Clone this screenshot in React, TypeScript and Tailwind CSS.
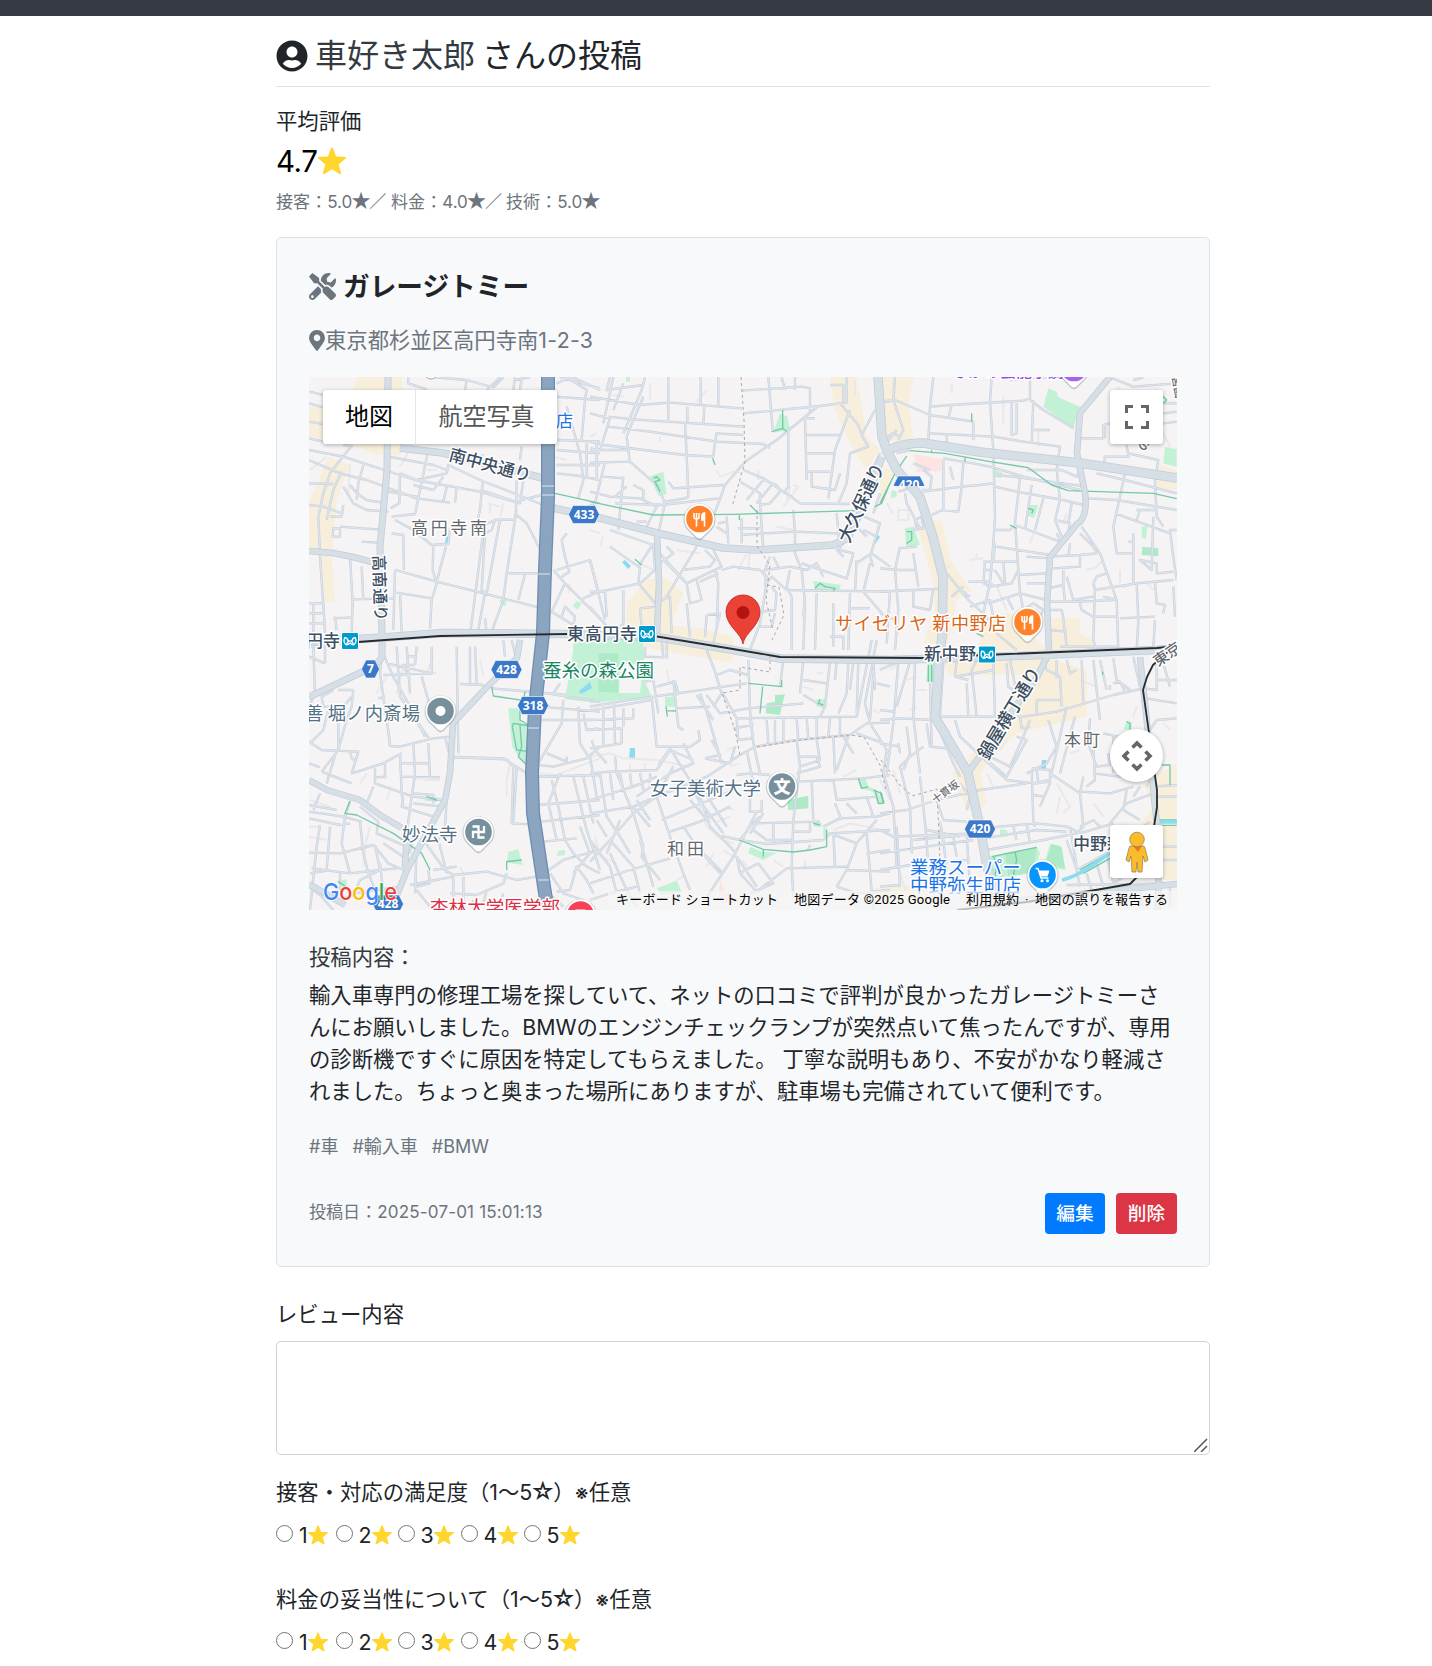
import React from "react";
import { FaMapMarkerAlt, FaTools, FaUserCircle } from "react-icons/fa";

type Tile = { x: number; y: number; shops: string; green: string; deep: string; minor: string; faint: string; path: string };

// Each tile is drawn at three units per map pixel.
const tiles: Tile[] = [
  {
    x: 300,
    y: 370,
    shops: "M170 20H305V60H160ZM27 110H75V205H27ZM150 222H305V255H230ZM85 260L150 285L110 390L95 560L105 695H75L60 560L27 540V400Z",
    green: "M600 690L618 686V707H605ZM830 692L846 700L832 718L818 708ZM820 820H900V840H820Z",
    deep: "",
    minor:
      "M27 65L70 75M27 100L70 112M27 155L70 162M27 205L70 215M27 240L130 260L345 330L540 365M27 270L120 310L200 330L350 385L450 398M130 225L155 228L130 258L90 310L70 370L55 440L60 560L75 780M27 340L100 342M27 405L70 410L130 432M150 345L170 370L200 390L250 398M130 350L160 400L200 420L265 425M90 440L125 440L130 405M100 475H120V500H98ZM120 470L185 475L235 478M185 515L235 518M125 305L100 360L80 450M150 560L158 700L155 790M185 590L190 690M190 285L175 340L170 390M275 440L345 432L385 240M265 365L350 380M300 310L350 330L440 310L445 285L540 330M300 310L298 400L272 415M265 260L400 285L440 300M325 22V40L380 58M405 22L500 30L580 52L610 22M500 30L495 60M560 60L600 22M645 22L640 60M665 22L660 60M690 22L640 30M545 365L550 330M540 330L730 405M545 365L540 420L535 440L548 500L512 780M275 490L310 495L312 600M285 450L340 480L395 525L445 522L450 475M400 530L398 600L410 640L395 690L390 775M438 530L410 635M285 600L410 635L530 665L715 712M290 668L395 685M155 688L285 685M285 600L280 780M300 670L305 785M540 470L585 450L645 448L648 420M585 450L575 480L555 490L545 660L555 668L535 780M600 450L560 670M645 450L620 610L610 690L575 785M620 610L715 610M675 612L655 690M645 430L680 460L718 535M545 360L645 395L725 375M650 330L648 430M430 320L400 360L340 345M440 350L430 395M470 350L465 398M540 365L660 400L670 330M480 240L510 270L550 255M440 245L540 280M665 230L660 270M770 40L815 20L900 60M765 80L900 90M780 22L900 55M800 22L860 60L855 90L845 210M770 210L900 215M770 240L900 250M770 285H900M770 310L840 318L900 330M800 110L840 250L850 330L835 385M860 220L860 320M890 210V330M760 600L795 640L900 745M795 640L755 725L820 765L825 740L795 710L785 740M770 600L870 570L895 665L840 690M800 490L785 510L795 560L808 605L785 620M27 700H70L75 790M27 730H70M40 700V790M27 760H75M100 745L160 742M105 740L110 780M555 745L560 790",
    faint: "M150 280L145 370M80 260L30 300M565 400L600 410M570 400V430M610 400L600 440M760 260L800 270M865 405L900 410M870 480L900 490M810 640L805 670M380 300H410M345 210L300 290",
    path: "M765 370L900 400",
  },
  {
    x: 590,
    y: 370,
    shops: "M720 20H800L830 200L870 240L835 290L820 290L765 190L735 120ZM170 630L225 622L280 670L240 765L330 775L430 800V825L330 820L200 790L110 770V700Z",
    green: "M570 130L592 140L600 180L550 188ZM180 318L220 305L230 372L205 378ZM670 632L753 645L745 665H675ZM0 808H155V840H0ZM108 20H120V35H108Z",
    deep: "",
    minor:
      "M0 80L150 105L240 98L455 115M55 140L130 148L460 170M0 130L60 145L30 240L0 235M55 170L180 185L380 215L520 222L540 235M0 215L40 225L285 255L370 260M0 240L110 240M0 278L120 275L205 350L225 400L205 490M70 22L40 160M165 22L155 60L100 190M60 22L50 60L160 45M160 80L130 150L110 200L120 280M100 40L70 120M235 22V150M292 110V155M343 112L340 160M332 22V105M385 22V105M455 62L635 50L660 55V130M460 130L690 108L770 98M465 275L560 210L685 108M535 22L548 180M615 22V60M575 22L585 60M595 185L595 350L580 370M640 145H675M645 150L650 330M650 195H750M650 250H735M650 305H720M780 120L735 240L715 385M720 45H760V95M770 22V100M750 100L775 130L805 165L815 195L835 230L780 250L770 340L745 400M855 120L815 195M880 95H900M870 250L800 400M370 260L375 215L380 190L460 195M465 275L405 345L385 400L365 450M460 300L520 325L610 385L630 400L780 402M450 335L510 370L510 405L540 400L570 365L560 345L520 330L470 390M545 345L500 400M665 310V350L735 360L750 310M215 405L385 385M225 395L285 385L295 380L290 255L285 160M235 335L250 355L400 345M0 365L60 380L150 385L200 410M45 275L15 400L0 410M40 320L100 325M100 320L85 480M75 400L220 405M130 345L160 360V390M75 380L110 350M205 400L165 480M170 455L140 455M385 460L410 455M380 470L410 490M410 440L415 520M455 445V520M450 495L520 490L620 485L740 490L780 470M445 475H510M510 400L520 540M610 420L615 490L615 550L635 600L645 700L640 840M740 430L750 540L790 550L770 625L635 580M540 560L525 600L600 590L650 600L680 580L700 620M565 590L550 560M370 540L395 590L290 640L220 570M320 530L230 680L200 700M205 545L290 640M345 540L375 570L360 590L275 600M230 530L250 550L210 580M395 600L430 590L510 600L530 620L525 645L545 620L590 660L900 665M60 480L190 525L195 600L150 640L30 665L0 665M0 570L45 750M0 710L60 780M30 665L45 665L50 740M100 660V760L80 780M150 590L145 640L195 700L205 695L240 680L245 790M60 530L145 590L190 520M150 715L200 710M150 715L155 770L190 790M290 640L300 700L335 690L320 630M290 700L300 800M375 600L385 640L380 780M350 735L390 730L370 820M350 735L345 800M330 635L385 610M520 600L530 640L510 760L480 840M515 725L555 720L560 670L545 650M510 770H545L555 730M600 600L590 650L605 680V840M680 670L675 840M645 675L640 740M780 670L775 840M730 700V830M775 715H840M800 570L795 665M800 580L845 550L900 590M760 560L740 540L760 520M800 430L870 460L840 560L850 590M820 480L860 500M780 450L830 500M850 430L870 370M720 800H760V840M840 580L820 665L880 735",
    faint: "M350 60L320 95M505 300V330M610 345L625 350L580 410M600 350L590 390M210 200V215M480 540L475 590M470 550L445 600M380 300L390 320L430 305L455 310M260 540L330 550M560 470L610 480M180 40V90M65 75L100 80M0 200L20 190M40 500L30 530M795 30V80M150 580L190 600",
    path: "M0 395L190 435L430 433L600 428L800 422M578 120V175L545 185M578 175L590 185M368 265L375 285M190 325L200 320L210 330L195 335L210 365M448 435V450M480 405L505 430M135 568L155 585M675 655L690 640L705 650L735 655L730 663M855 410L875 400L900 340",
  },
  {
    x: 880,
    y: 370,
    shops: "M0 20H100L85 100L100 205L60 215L20 210L5 100ZM835 285L890 300V360L832 355ZM160 450L185 455L215 580L275 660L230 690L205 820H130L165 720L160 640L115 480ZM510 745H600V790L640 810V840H510ZM300 740L400 730L500 840H300ZM0 300L50 290L20 370L0 400Z",
    green: "M505 55L530 65L535 82L600 110L580 175L490 110ZM855 230L890 238V290L850 280ZM345 300L368 308L362 325L342 318ZM445 405L475 405L462 445L440 435ZM75 475L100 470L120 525L78 530ZM785 470L802 468L798 505H785ZM35 360L50 365V380L32 385Z",
    deep: "M787 531L835 534V559L785 555Z",
    minor:
      "M0 95L45 90L150 135L280 155V210M45 22L40 90L70 180L55 210M160 22L150 110L145 215M155 110L210 105L430 92L450 85V25L390 30M335 22L330 95L340 240L345 440L340 520L330 640L310 730M215 105L205 145M410 100V190L395 195V100M450 90L490 120L580 175M460 90L455 220M455 180H510M150 190L340 200L430 215L540 230L530 300M200 195V225M430 22H580M600 205H670V165L690 160M675 205V165M670 260L745 260L740 225M745 250L835 270L825 330L830 440L850 470M670 290L675 265M735 310L700 470L710 550L755 550M650 310L735 330L890 370M620 385L710 390L890 420M440 300H545L590 320L600 300M345 315L400 320L620 350M345 350L410 365L550 390L610 405M340 340L300 345L245 350L130 365M155 435L185 420L235 425L245 350M190 270V420M250 275L245 345M190 265L280 280L330 290L430 320L600 360M420 320L415 370L405 455L415 600L420 670M455 345L435 480M490 385L465 480M530 300L540 390L525 450L545 500M525 450L570 460L565 480M575 400L565 460M530 490L545 520M345 480H390L405 465L540 515M350 530L510 555M440 560L510 565M345 520L340 575H410M310 575H345M315 575L310 640L330 650L395 640L415 600M315 600H340M415 615L500 610M440 640H500M325 700L420 670L500 690M420 670L430 720L460 700L490 720L480 740M380 680L400 720M370 575L375 640L350 650M200 610L265 690L320 740L350 790L410 840M250 650L215 680M265 635L325 635L345 650M240 660L270 680M270 710L330 690L340 740M150 720L100 710V660L200 655M150 720L160 655M60 530L45 600L55 720L45 840M55 535L110 530M0 595L55 600H110M100 550L115 650M0 665L100 660M30 665L20 820M100 480L130 475L125 440L105 450L110 480M75 370L80 400L120 475M55 365L75 360L100 340L80 320M130 300L155 320L150 360L125 360M100 280L150 300M705 430L870 490M770 420H830M780 420L770 450M820 440L815 600L780 570L830 580V610L880 605M760 490V640L730 650M745 515H760M890 480H870L880 560L890 630M605 470L660 550L710 690L715 840M570 520L565 560M510 560L600 555L650 550L640 530L600 490M520 595L600 590V560M505 655L550 645L555 695M510 695L600 695L700 690M560 620L580 690L640 680M550 600V660M640 640L650 620L680 610M640 640L645 660L770 640L880 630M645 650L640 810L650 840M640 740H715M770 640L775 750L770 840M825 635L830 700L855 705L850 730M720 745L825 740M825 750L820 830M670 680L710 690M510 720H545L550 745L560 830M510 780L560 785M600 700L605 720L640 740M880 650L885 740M540 830H710M0 730L45 750M690 22L760 50L890 40M760 30L790 22M780 110L830 60M830 100H890M850 130L890 125M850 160L890 155M15 205L40 190L60 200M10 230L50 180M50 250L90 240M345 600L370 640M210 290L220 330",
    faint: "M215 40V70M370 80V160M560 430L550 460M460 490L450 520M40 40V60M270 570L310 565M290 550V570M210 590L190 600M350 650L380 720M55 420H85V450H55ZM620 600L655 590M670 570L650 590M720 600V640M850 190L870 230M800 640L820 660M20 400L40 430M475 180V230M715 50V100",
    path: "M90 242L195 250L330 275L445 293L515 345L565 362L820 370L890 386M45 310L80 258M155 240V250M255 262V275M0 400L45 310M275 130V155M445 415L460 420L455 430M390 465L410 475M80 485H95V510L80 520M820 70L850 80L860 90L850 100M290 790L310 800",
  },
  {
    x: 300,
    y: 640,
    shops: "",
    green: "M825 0H900V190L795 178ZM625 205H655L665 250L685 255V375L655 350L637 320ZM375 470L412 472V485L375 482ZM625 635L655 628L668 675L620 668ZM775 632L795 630V645L770 648ZM110 722L140 718V745L125 738Z",
    deep: "",
    minor:
      "M27 50L75 70M27 20H75V70M40 20L45 160L27 200M245 50L240 100L270 310M260 70L395 100M250 105L395 100V20M290 20L300 170L390 300M240 20L280 110L330 200L375 290M320 20L330 160M350 20L345 75M320 48L350 50M345 75H310L330 120M365 110L390 200M470 20L475 340M510 20V130M525 20L530 130M480 132L550 135M610 0L615 50M635 0L650 60M235 175L255 170M160 150L155 200L140 240L115 330M115 150H160M155 170L130 200H70L65 170L100 150M115 200V330L65 395M27 305L65 330L175 335L155 400L250 370L305 340M85 210L70 270L30 310M65 395L155 430M110 330L80 430M150 335L155 355L170 365M27 370L60 382M270 318L300 320L400 295L450 290M265 270L270 320M300 340L305 460L310 500M340 310L345 405L335 470L320 580M385 310L390 410M300 370H385M305 410L420 412M225 385V430L340 470L430 480M225 412L260 410M255 370V415M220 440L200 490M310 470L305 500L400 530M340 460L400 465V490M340 490L430 500M435 290L450 350L610 355L680 400M460 352L620 358L640 380L635 550L690 553M650 385L640 545M340 565L330 640M440 480L435 560L415 600L440 700M370 600L435 690L460 705L560 695L650 720L710 710M400 690L470 680M460 710V790M490 710V810M450 760L530 765L610 730L620 700M330 735L460 710M385 690L390 730L350 740M150 485L135 530M60 460L40 510M27 495L110 510M27 515L130 530L185 545M27 535L120 555L150 550M135 530L125 610L150 700M60 555L50 620L30 810M90 560L80 690M27 638L120 640L220 615L265 670L310 690M180 545L190 640L205 700L230 760M180 500L235 545L230 580L320 620M250 610L310 650M225 615L240 690L180 720L160 770M150 700L240 690L290 685M35 685L150 700M90 690L30 700M120 700V750M240 670L250 760L300 740M160 760L300 740M27 740L60 765L100 810M350 620L345 760M350 750L390 800M560 750L550 790M520 780V810M610 760L600 790M740 160L900 185M720 200L900 215M720 240L880 240M780 130L760 160M790 180L785 250L715 370M715 375L760 380L860 355L900 320M835 200L840 310L865 350M850 220L860 270L895 265M740 340L800 365V350M715 410L900 405M755 420L775 500L795 600L820 640M820 410L860 570L900 690M780 400L745 490L770 600M850 410L880 550M715 495L900 480M725 545L900 525M730 605L830 595M740 695L790 660L900 630M750 700L790 760L850 780M770 755L810 750L830 680L860 720L880 760M820 640L860 680L900 700M745 760L790 800M840 560L870 640L820 700M575 145L800 165",
    faint: "M400 50L380 100H410M260 110L230 160M715 400L770 405L900 355M630 370L620 420V470M180 430L200 400M260 480L270 450M540 60L550 110M200 590L190 680M210 560L200 600M480 680L490 700M370 420H420M27 560H60M27 590L80 600M310 80L290 160M30 480L90 500",
    path: "M575 140L580 168L680 183M675 155L670 185L660 205V240L690 258L640 250L637 260L650 330L690 335M660 255L665 320L655 350L680 375M150 483L135 520L170 525L280 580L365 640L390 690M380 470L410 480M620 690V665L665 660M115 725L140 742",
  },
  {
    x: 590,
    y: 640,
    shops: "M165 0H200L430 45L425 68L165 22ZM855 745L900 740V785L850 780Z",
    green: "M0 10H160L165 125L185 170L0 190ZM225 170H258V200H225ZM680 178H705V200H680ZM805 415L825 412L835 440L860 450L880 490L865 495L850 455L810 445ZM670 548H695V560H670ZM480 620L515 635L560 638L520 660L475 640ZM200 745L260 722L275 755L215 765ZM700 565H712V590H700Z",
    deep: "M25 40H85V158L25 155ZM555 165L585 163L575 200L570 225L527 220L530 190L555 185ZM592 480L655 467V505L595 510Z",
    minor:
      "M165 22V50L220 52L215 0M230 0V55M165 125L190 120L205 220M185 170L200 320L300 320L330 300L325 270M0 200L130 178L300 155L470 130M0 212L185 180M0 240L130 235V205M0 270L95 265V310L0 325M72 190L75 310M100 205V260M40 200V320M250 120L265 260L280 270M200 140L255 125L265 160L250 170M260 205L360 200M350 30L375 95L395 160L370 200M380 105L420 90L475 105M475 60L480 210L490 310L510 400M395 155L440 235L800 230L845 0M330 160L350 215L395 370M350 165L390 220L475 205L640 190M440 240L445 300L485 295M430 265L490 255M320 165L370 240M480 240L485 270M530 240L535 310M555 240V305M580 235V305M620 235L625 300M650 235L655 295M680 235V290M720 235L715 290M750 230V285M435 320L420 370L345 355M450 345L350 410L200 470L130 520L60 600L0 665M495 320L450 345M495 320L620 300L780 285M780 285L830 250L900 248M840 250L825 190L860 0M580 60L570 140M640 60L630 160M640 120L710 130M720 65L705 200L690 230M640 165L700 200M740 65L735 120M775 65L770 160L745 220M790 65L780 150M805 65L800 220M850 65L855 150M860 130L900 140M850 100L840 240M620 300L630 380L625 420L610 540L605 680L610 770M630 350H680L690 380L620 400M630 380L690 360L680 300M730 290L735 400M760 290L790 340M775 290L740 390M840 250L900 345M800 280L880 310M620 425L820 415L900 405M730 420L740 480L860 470M665 425L670 540M735 490L755 540M770 490L800 520M830 470L850 530M480 480V515H515V480M440 405L480 400L540 405M470 330L490 430L480 480M500 515L430 650L345 780M380 585L450 600L530 612L700 600M510 530L480 560L450 600M495 550L690 545M610 575H660V550M550 550V605M520 520L480 580M490 570L530 600H610M700 560L750 535L860 530L900 520M700 600L720 580L900 570M730 580L735 680M720 580L800 610L860 540M800 610L770 690L740 740M770 690L900 695M590 685L770 680M660 615L655 630M590 685L500 755L450 700L440 650L500 740M505 670L550 730L480 760M450 700L505 670M830 580L850 810M830 640L900 630M740 740L800 760L900 750M0 400L60 395L200 390L240 330L310 360M205 375L240 325L330 470L360 560L440 640M280 310L310 370L240 400L140 470M345 355L390 345L365 300M75 350L80 400L130 520L160 620L155 650L210 720M0 480L130 440L200 410M0 520L130 500L200 470L250 380M30 400L50 530L90 590L120 640M60 400L70 480M90 400L100 450M120 400L125 440M150 400L160 450M180 400V440M0 350L20 470M5 300L15 330L50 370M130 500L180 560M200 470L240 590L280 700L300 750M215 540L430 450M300 420L320 470L400 580M240 575L330 545L420 500M60 600L130 680L150 760M0 730L120 690L240 655M60 640L110 750L140 800M150 600L170 670L190 740M0 600L60 680L80 760M20 540L50 590M280 560L320 620L400 700M345 650L390 700M300 480L360 550M0 780L60 760L140 740M140 480L180 540M340 450L410 560M90 540L50 640",
    faint: "M0 350L60 340L100 355L200 360L300 380M230 90L240 130M120 370V390M165 370V390M410 330L440 320M420 380L450 370M410 500L430 510M320 470L350 560L400 600L430 610M370 640L350 680M15 590L30 650L80 670M400 630L430 650M455 660L470 680M730 570L780 550L900 575M850 210L870 220M760 410L800 390M680 100H700M645 660V690M550 660L580 680M640 140L670 150M420 530L380 545M260 720L280 710",
    path: "M475 130L575 140V120M518 140L510 220M228 200L232 230M230 212L258 213M690 178L685 190L700 195M805 415L815 445L835 440M855 450L865 490L880 490L875 460L850 450M448 600L520 628L610 636L660 630L710 620V570M670 550L690 555M520 628V650",
  },
  {
    x: 880,
    y: 640,
    shops: "M195 60L500 55L620 90V230L410 280L340 350L300 400L320 490L300 510L260 510L215 400L250 380L400 170L430 105H205L195 85ZM790 430L890 370V545L780 555L820 500ZM835 550H890V720H835ZM0 735L140 740V790H0Z",
    green: "M145 70H165L160 128L138 125ZM360 568L382 570V590L360 588ZM0 450L15 485L0 495ZM740 245H755V270L730 268ZM330 650L470 620L480 640L460 700L340 715ZM510 612L540 618L558 690L490 680Z",
    deep: "M515 612L545 620L555 685L495 672ZM375 640L470 625L460 695L385 710Z",
    minor:
      "M0 240L60 235L160 240M0 90L55 65L40 250L20 400M105 65L100 230L120 400M90 65L50 200M0 210L40 215M190 70L180 230L430 230L530 215L700 165L790 145M230 60L225 110L265 120M290 60L275 90L290 230M260 130L265 230M340 60L345 230M390 60L410 160M380 70L385 140L400 150M225 110L340 90M490 60L500 90L540 110L545 200M470 180H540M470 180V220M530 60V115M560 60L570 100L590 90M605 60L610 190M640 60L660 240M660 60L680 150M700 55L710 120L750 150M700 130L720 125L735 155M690 150V135M760 50L780 140M830 50V150L790 145M830 120H890M800 175L890 190M850 70L870 140M810 270L830 240L890 235M800 330H830M630 235L625 310L650 380L690 375L685 340M560 200L510 420L460 430M450 240L430 290L390 380L330 350M585 230L540 400M505 240L530 320L500 370L440 400M225 240L240 290L380 420L460 430L510 425M165 240L220 370L240 410M320 360L380 410L440 300L410 290M420 230L425 265L450 260M455 390L460 540L465 560M455 385L510 390V430L480 500M470 390L475 430H455M460 465L490 470M510 400L600 460L610 560L590 580M600 455L690 460L760 440M610 410L600 460M640 310L645 420L620 440M640 400L720 410L790 390M700 290V400M670 280L760 300M690 550L740 490L820 460M660 560L640 540L600 560M820 440L890 435M830 470H890M740 450L730 510L780 540M780 440L760 470M820 400L800 440M0 520L80 510L170 480L300 450L440 430M240 430L270 470L260 510M140 250L150 320L200 325M130 320L90 350L60 380L90 500L95 640M120 410L130 500L140 600L145 700M80 260L90 340L70 390M0 310L60 320M20 330L10 400L40 500L50 680M0 570L40 590L280 580M50 560L60 740M170 480L190 540L260 545M180 545L190 600L200 690M140 570L240 590M100 600L300 580M300 565L470 550L560 560L600 580L700 550M310 595L470 570L560 575M220 590L230 650M260 590L270 740M0 640L100 625L280 600M0 690L120 670L260 660M320 630L490 600L590 580M440 550L450 610M400 560L410 600M560 600L590 690L600 740M570 560L590 680M590 690L680 640L810 545M620 700L640 770M650 670L670 740M680 640L700 730M560 735L890 730M700 730L750 700M780 730L785 800M870 730V800M840 620H890M840 660H890M0 740L60 735M150 130L155 320M55 310L60 340",
    faint: "M0 420L30 480M40 390L60 460M60 65L30 90M110 110L80 120M110 200L90 210M320 400L340 440M530 430L570 500L550 520M640 490L670 530M570 340L600 330M360 330L380 300M720 550L740 590M60 700L80 760M190 250L210 280M600 120L650 140M110 150L140 150M540 470L530 520M600 40V60M770 200L760 230M850 250L870 270M450 90L480 140",
    path: "M145 75V125M155 75V125M0 455L12 490M740 245L750 250V268M335 650L470 622M340 650L350 670L345 710M405 635L410 660L400 705M845 375H870V435M820 540H890M820 556H890M600 690L670 650M610 700L690 655M668 95V105",
  },
];

const majorRoads = [
  { w: 6, d: "M400 448L443 453L500 467L542 478M553 508L600 518L657 533L723 548L757 550L833 545L848 538L866 500L882 457" },
  { w: 5.5, d: "M388 377L387 470L380 547L382 637L382 657Q378 665 362 672L309 697" },
  { w: 5, d: "M309 551L333 553L353 557L372 562M657 533L659 583L657 633" },
  { w: 7, d: "M309 642L390 637L443 633L567 634L657 637L733 650L780 658.500L890 660L990 657L1157 650L1177 648" },
  { w: 5, d: "M520 640L517 658L487 687L453 723L450 773L445 800L407 870L397 895" },
  { w: 5, d: "M309 780L327 790L360 800L380 815L402 828M407 833L405 868" },
  { w: 8, d: "M878 377L882 437L888 453L897 470L920 497L933 537L943 577L942 637L939 660L935 717L968 773L980 827L987 867L997 895L1003 910" },
  { w: 8, d: "M886 455Q890 444 923 443L980 452L1080 463L1177 478" },
  { w: 5, d: "M1110 377L1080 413L1077 453L1085 493Q1088 518 1077 524L1050 557L1047 603L1049 653L1037 677L970 770" },
  { w: 5, d: "M1140 657L1147 723L1155 807L1159 840L1158 910M1003 902L1177 884M309 884L345 905" },
];

function Strokes({ d, color, width, dash }: { d: string; color: string; width: number; dash?: string }) {
  return <path d={d} fill="none" stroke={color} strokeWidth={width} strokeLinejoin="round" strokeLinecap="butt" strokeDasharray={dash} />;
}

function TileLayer({ children }: { children: (tile: Tile) => React.ReactNode }) {
  return (
    <>
      {tiles.map((tile) => (
        <g key={`${tile.x}-${tile.y}`} transform={`translate(${tile.x} ${tile.y}) scale(0.33333)`}>
          {children(tile)}
        </g>
      ))}
    </>
  );
}

function Label({ x, y, size = 17, color = "#3c4f63", rotate = 0, weight = 500, spacing = 0, width, children }: {
  x: number; y: number; size?: number; color?: string; rotate?: number; weight?: number; spacing?: number; width?: number; children: string;
}) {
  return (
    <text
      x={x}
      y={y}
      fontSize={size}
      fill={color}
      fontWeight={weight}
      letterSpacing={spacing}
      textLength={width}
      stroke="#ffffff"
      strokeWidth={3}
      strokeLinejoin="round"
      paintOrder="stroke"
      transform={rotate ? `rotate(${rotate} ${x} ${y})` : undefined}
    >
      {children}
    </text>
  );
}

function Shield({ x, y, label }: { x: number; y: number; label: string }) {
  const half = label.length === 1 ? 9 : 15.5;
  return (
    <g transform={`translate(${x} ${y})`}>
      <path d={`M${-half} 0L${-half + 4.500} -9H${half - 4.500}L${half} 0L${half - 4.500} 9H${-half + 4.500}Z`} fill="#3b78c8" stroke="#fff" strokeWidth=".6" />
      <text y="4.300" fontSize="12" fontWeight="700" textAnchor="middle" fill="#fff" fontFamily="Open Sans, Noto Sans, sans-serif">{label}</text>
    </g>
  );
}

function Pin({ x, y, color, children }: { x: number; y: number; color: string; children?: React.ReactNode }) {
  return (
    <g transform={`translate(${x} ${y})`}>
      <path d="M0 21.500Q-3 21 -5 18L-11.500 11.500A16 16 0 1 1 11.500 11.500L5 18Q3 21 0 21.500Z" fill="#6b7781" opacity=".35" />
      <path d="M0 19.500Q-2 19.500 -4 17L-10.500 10.500A15 15 0 1 1 10.500 10.500L4 17Q2 19.500 0 19.500Z" fill="#fff" />
      <circle r="13.300" fill={color} />
      {children}
    </g>
  );
}

function Fork() {
  return (
    <g fill="none" stroke="#fff" strokeWidth="1.600">
      <path d="M-5.500 -6V-2Q-5.500 0 -3 0Q-.5 0 -.5 -2V-6M-3 -6V7.500" />
      <path d="M5 -6V7.500M2.300 -2.500Q2.500 -6 5 -6V1H2.300Z" fill="#fff" />
    </g>
  );
}

function Metro({ x, y }: { x: number; y: number }) {
  return (
    <g transform={`translate(${x} ${y})`}>
      <rect x="-8.500" y="-8.500" width="17" height="17" rx="1.500" fill="#009bcd" stroke="#fff" />
      <path d="M-3.500 3.800C-6.200 2.500 -6.500 -1 -5.300 -3.300C-3.200 -3.200 -2.200 -2 -2 0M3.500 3.800C6.200 2.500 6.500 -1 5.300 -3.300C3.200 -3.200 2.200 -2 2 0M-3.500 3.800C-2.800 1 -1.500 -.2 0 -.2C1.500 -.2 2.800 1 3.500 3.800C2 3.800 1 3 0 2C-1 3 -2 3.800 -3.500 3.800Z" fill="none" stroke="#fff" strokeWidth="1.300" />
    </g>
  );
}

function MapCanvas() {
  const highway = "M548 377L548 497L545 570L543 633L535 707L532 773L533 813L545 893L548 910";
  const rail = "M358 642L440 636L567 634M657 636.500L733 649L780 657L923 658L985 655L1157 648L1177 646M1170 650L1153 665L1147 677L1143 690L1150 740L1157 790L1157 807L1153 833L1145 860L1137 877L1130 884L1027 902L957 910";
  return (
    <svg className="block h-[533px] w-[868px]" viewBox="309 377 868 533" fontFamily="Noto Sans CJK JP, sans-serif">
      <rect x="309" y="377" width="868" height="533" fill="#f5f3f4" />
      <TileLayer>{(t) => (<><path d={t.shops} fill="#f7efdc" /><path d={t.green} fill="#c3f1d5" /><path d={t.deep} fill="#aeeac8" /></>)}</TileLayer>
      <path d="M914 454L943 459L941 471L917 472ZM720 880L725 893L735 891V903H718Z" fill="#fde3e1" />
      <path d="M620 664H643L640 693H619Z" fill="#f5f3f4" />
      <path d="M446 537L449 534V542L445 543ZM622 562L625 560L631 566L628 569ZM873 542L877 534L880 537L875 544ZM630 748H635V758H629ZM1042 760H1046V769H1041ZM579 691L590 682L592 688L581 694Z" fill="#8adcf0" />
      <TileLayer>{(t) => <Strokes d={t.faint} color="#e9e8ea" width={6} />}</TileLayer>
      <TileLayer>{(t) => <Strokes d={t.minor} color="#c3cdd9" width={7} />}</TileLayer>
      <TileLayer>{(t) => <Strokes d={t.minor} color="#dde3ea" width={4.2} />}</TileLayer>
      <TileLayer>{(t) => <Strokes d={t.path} color="#73c9a8" width={4} />}</TileLayer>
      <path d="M1062 880Q1075 877 1090 867L1110 853M1160 822H1177" stroke="#8adcf0" strokeWidth="3.500" fill="none" />
      {majorRoads.map((road) => <Strokes key={road.d} d={road.d} color="#c0ccd8" width={road.w + 1.5} />)}
      {majorRoads.map((road) => <Strokes key={road.d} d={road.d} color="#d6dfe6" width={road.w} />)}
      <Strokes d="M741 377L744 420L745 462L742 472L732 507M757 510V546L770 565L766 600L773 630M767 585L779 587L784 615L772 640M770 655V672L740 667V690L722 693L735 730L740 755M757 747L800 740L850 735L864 737L880 765L886 790M881 760L900 785L912 796L937 789L940 860" color="#aaa8a8" width={1} dash="3 3" />
      <Strokes d={highway} color="#6d8db1" width={14} />
      <Strokes d={highway} color="#8ba4bf" width={11.5} />
      <path d="M542 486H554M542 495H554M538 574H550M528 728H539M538 880H549" stroke="#dfe7ee" strokeWidth="1" />
      <Strokes d={rail} color="#272b2e" width={1.8} />

      <Label x={556} y={427} color="#1a73e8" weight={400}>店</Label>
      <Label x={448} y={460} rotate={15} size={17} width={84}>南中央通り</Label>
      <Label x={411} y={534} size={17} color="#64696f" weight={400} width={76}>高円寺南</Label>
      <text x="379" y="557" transform="rotate(88 379 557)" dy="6" fontSize="16" fill="#3c4f63" stroke="#fff" strokeWidth="3" paintOrder="stroke" fontWeight="500" textLength="66" dx="-2">高南通り</text>
      <Label x={849} y={544} rotate={-65} size={18} width={85}>大久保通り</Label>
      <Label x={306} y={647} size={17}>円寺</Label>
      <Label x={567} y={640} size={17} width={70}>東高円寺</Label>
      <Label x={924} y={660} size={17} width={52}>新中野</Label>
      <Label x={543} y={677} size={18.5} color="#188563" weight={400}>蚕糸の森公園</Label>
      <Label x={305} y={720} size={18.3} color="#547186" weight={400} width={115}>善 堀ノ内斎場</Label>
      <Label x={402} y={841} size={18.5} color="#547186" weight={400}>妙法寺</Label>
      <Label x={650} y={795} size={18.5} color="#547186" weight={400}>女子美術大学</Label>
      <Label x={667} y={855} size={17} color="#64696f" weight={400} width={37}>和田</Label>
      <Label x={1064} y={746} size={17} color="#64696f" weight={400} width={36}>本町</Label>
      <Label x={835} y={630} size={18} color="#d76717" weight={400} width={171}>サイゼリヤ 新中野店</Label>
      <Label x={988} y={761} rotate={-59} size={18} width={104}>鍋屋横丁通り</Label>
      <Label x={935} y={804} rotate={-36} size={10.5} color="#6d7072" width={31}>十貫坂</Label>
      <Label x={1158} y={667} rotate={-35} size={15} color="#64696f">東京</Label>
      <Label x={1073} y={850} size={17}>中野新橋</Label>
      <Label x={910} y={874} size={18.5} color="#1a73e8" weight={400}>業務スーパー</Label>
      <Label x={910} y={892} size={18.5} color="#1a73e8" weight={400}>中野弥生町店</Label>
      <Label x={430} y={914} size={18.5} color="#d93045" weight={400} width={130}>杏林大学医学部</Label>
      <Label x={952} y={377} size={16} color="#914ee4" weight={500}>なかの芸能小劇場</Label>
      <Label x={1172} y={377} rotate={80} size={11} color="#64696f">宮園</Label>
      <Label x={1146} y={452} rotate={-70} size={13} color="#64696f">の</Label>

      <Metro x={350} y={641} />
      <Metro x={647} y={634} />
      <Metro x={987} y={654.5} />
      <Shield x={584} y={514.5} label="433" />
      <Shield x={370.500} y={669} label="7" />
      <Shield x={506.500} y={669.5} label="428" />
      <Shield x={533} y={705.5} label="318" />
      <Shield x={980} y={829} label="420" />
      <Shield x={388} y={904} label="428" />
      <svg x="890" y="475" width="40" height="11" viewBox="890 475 40 11"><Shield x={909} y={485} label="420" /></svg>
      <Pin x={699.500} y={519} color="#ff832b"><Fork /></Pin>
      <Pin x={1027.500} y={622} color="#ff832b"><Fork /></Pin>
      <Pin x={440.500} y={711} color="#78909c"><circle r="5" fill="#fff" /></Pin>
      <Pin x={478.500} y={832} color="#78909c"><path d="M-6 -5.500H0V5.500H6M-5.500 6V0H5.500V-6" fill="none" stroke="#fff" strokeWidth="2.300" /></Pin>
      <Pin x={782} y={786.5} color="#78909c"><text y="6" fontSize="17" fontWeight="900" textAnchor="middle" fill="#fff">文</text></Pin>
      <Pin x={1042.500} y={875} color="#0695ff"><path d="M-7 -6.500H-4.500L-1.500 3H6" fill="none" stroke="#fff" strokeWidth="1.500" /><path d="M-4 -4.500H7L5 1.500H-2Z" fill="#fff" /><circle cx="-.5" cy="5.700" r="1.500" fill="#fff" /><circle cx="5" cy="5.700" r="1.500" fill="#fff" /></Pin>
      <Pin x={580.500} y={914.5} color="#f64258"><path d="M-5 -5H5V2H-5Z" fill="#fff" /></Pin>
      <Pin x={1074} y={368} color="#a661f5" />
      <circle cx="431" cy="372" r="7" fill="#fff" stroke="#aaa" />

      <path d="M743 644C741.500 633 726 626 726 612A17 17 0 1 1 760 612C760 626 744.500 633 743 644Z" fill="#ea4335" stroke="#c5221f" strokeWidth=".8" />
      <circle cx="743" cy="612.500" r="6.500" fill="#b31412" />

      <rect x="608" y="891" width="569" height="19" fill="#f5f5f5" opacity=".72" />
      <g fill="#000" fontSize="13" fontFamily="Roboto, Noto Sans CJK JP, sans-serif">
        <text x="616" y="904" textLength="162">キーボード ショートカット</text>
        <text x="794" y="904" textLength="156">地図データ ©2025 Google</text>
        <text x="966" y="904" textLength="53">利用規約</text>
        <text x="1025" y="904">·</text>
        <text x="1035" y="904" textLength="133">地図の誤りを報告する</text>
      </g>
      <text x="323" y="900" fontFamily="Inter, sans-serif" fontSize="23.500" fontWeight="500" textLength="74" lengthAdjust="spacingAndGlyphs" stroke="#fff" strokeWidth="1.500" paintOrder="stroke">
        <tspan fill="#4285f4">G</tspan><tspan fill="#ea4335">o</tspan><tspan fill="#fbbc04">o</tspan><tspan fill="#4285f4">g</tspan><tspan fill="#34a853">l</tspan><tspan fill="#ea4335">e</tspan>
      </text>
    </svg>
  );
}

function MapPanel() {
  return (
    <div className="relative mt-[15px] h-[533px] w-[868px] overflow-hidden">
      <MapCanvas />
      <div className="absolute left-[14px] top-[13px] flex h-[54px] w-[234px] rounded-[3px] bg-white text-[24px] leading-[54px] shadow-[0_1px_4px_rgba(0,0,0,0.3)]">
        <div className="w-[93px] border-r border-[#e6e6e6] text-center text-black">地図</div>
        <div className="flex-1 text-center text-[#565656]">航空写真</div>
      </div>
      <div className="absolute right-[14px] top-[13px] flex h-[54px] w-[53px] items-center justify-center rounded-[3px] bg-white shadow-[0_1px_4px_rgba(0,0,0,0.3)]">
        <svg className="size-6" viewBox="0 0 24 24" fill="none" stroke="#666" strokeWidth="3"><path d="M1.500 8V1.500H8M16 1.500H22.500V8M22.500 16V22.500H16M8 22.500H1.500V16" /></svg>
      </div>
      <div className="absolute right-[14px] top-[352px] flex size-[53px] items-center justify-center rounded-full bg-white shadow-[0_1px_4px_rgba(0,0,0,0.3)]">
        <svg className="size-8" viewBox="0 0 32 32" fill="none" stroke="#666" strokeWidth="3.600"><path d="M11.500 7.500L16 3L20.500 7.500M11.500 24.500L16 29L20.500 24.500M7.500 11.500L3 16L7.500 20.500M24.500 11.500L29 16L24.500 20.500" /></svg>
      </div>
      <div className="absolute right-[14px] top-[448px] flex h-[53px] w-[53px] items-center justify-center rounded-[3px] bg-white shadow-[0_1px_4px_rgba(0,0,0,0.3)]">
        <svg className="h-[42px] w-6" viewBox="0 0 24 42" fill="#fbbc2c" stroke="#8b7951" strokeWidth=".7"><path d="M5 15H19L20 17L23 29L20 31L18 25L17 41H13L12 31L11 41H7L6 25L4 31L1 29L4 17Z" /><path d="M8 15H17L13 21Z" fill="#e67829" stroke="none" /><circle cx="12" cy="8.500" r="7.300" /></svg>
      </div>
    </div>
  );
}

function Star({ className }: { className: string }) {
  return (
    <svg className={className} viewBox="0 0 24 24" fill="#ffd62e" stroke="#ffd62e" strokeWidth="1.600" strokeLinejoin="round">
      <path d="M12 1.200L15 8.800L23.200 9.300L16.900 14.500L19 22.500L12 18.100L5 22.500L7.100 14.500L.8 9.300L9 8.800Z" />
    </svg>
  );
}

function Score({ label, value, last = false }: { label: string; value: string; last?: boolean }) {
  return (
    <span className="flex w-[115px]">
      {label}：{value}
      <span className="flex w-[17px] shrink-0 justify-center text-[21px]">★</span>
      {!last && <span>／</span>}
    </span>
  );
}

const choiceWidths = ["w-[59.500px]", "w-[62px]", "w-[63px]", "w-[63px]", "w-[60px]"];

function Rating({ name, label }: { name: string; label: string }) {
  return (
    <fieldset className="h-[107px]">
      <legend className="flex h-8 text-[21.33px] leading-8">
        <span>{label}（1〜5</span>
        <span className="flex w-[21px] justify-center text-[24px]">☆</span>
        <span>）</span>
        <span className="flex w-[14px] items-center justify-center pt-px text-[20px] font-medium">※</span>
        <span>任意</span>
      </legend>
      <div className="mt-[11px] flex h-8 items-center">
        {choiceWidths.map((width, i) => (
          <label key={width + i} className={`flex h-8 items-center text-[21.33px] leading-8 ${width}`}>
            <input type="radio" name={name} className="-mt-[3px] mr-[6px] size-[17px] shrink-0 appearance-none rounded-full border border-[#747474] bg-white" />
            <span>{i + 1}</span>
            <Star className="ml-[0.5px] size-5 shrink-0" />
          </label>
        ))}
      </div>
    </fieldset>
  );
}

export default function App() {
  return (
    <div className="h-[1666px] overflow-hidden bg-white font-[Inter,'Noto_Sans_CJK_JP',sans-serif] text-[21.33px] leading-8 text-[#212529]">
      <div className="h-4 bg-[#363a43]" />
      <main className="ml-[276px] w-[934px]">
        <h2 className="flex h-[71px] items-center border-b border-[#dee2e6] pt-[10px] text-[32px] leading-10">
          <FaUserCircle className="mr-[7px] size-8" />
          <span className="text-[#343a40]">車好き太郎</span>
          <span className="ml-[7px]">さんの投稿</span>
        </h2>
        <h3 className="mt-[18px] h-8">平均評価</h3>
        <div className="mt-[4px] flex h-10 items-center text-[29.500px] tracking-[-0.5px] text-black">
          <span>4.7</span>
          <Star className="ml-[1px] h-[28px] w-[28px]" />
        </div>
        <div className="mt-[7px] flex h-[27px] text-[17.07px] leading-[27px] text-[#6c757d]">
          <Score label="接客" value="5.0" />
          <Score label="料金" value="4.0" />
          <Score label="技術" value="5.0" last />
        </div>
        <article className="mt-[22px] h-[1030px] rounded-[5px] border border-[#dee2e6] bg-[#f8f9fb] px-8">
          <h4 className="mt-[32px] flex h-8 items-center text-[26.67px] font-bold">
            <FaTools className="mr-[7px] size-[27px] text-[#6c757d]" />ガレージトミー
          </h4>
          <p className="mt-[22px] flex h-8 items-center text-[#6c757d]">
            <FaMapMarkerAlt className="h-[21px] w-4" />東京都杉並区高円寺南<span className="tracking-[0.3px]">1-2-3</span>
          </p>
          <div className="pt-[6px]"><MapPanel /></div>
          <h5 className="mt-[31px] h-8 text-[#343a40]">投稿内容：</h5>
          <p className="mt-[6px] h-32 whitespace-nowrap">
            輸入車専門の修理工場を探していて、ネットの口コミで評判が良かったガレージトミーさ<br />
            んにお願いしました。BMWのエンジンチェックランプが突然点いて焦ったんですが、専用<br />
            の診断機ですぐに原因を特定してもらえました。 丁寧な説明もあり、不安がかなり軽減さ<br />
            れました。ちょっと奥まった場所にありますが、駐車場も完備されていて便利です。
          </p>
          <div className="mt-[24px] flex h-8 gap-[14px] text-[18px] text-[#6c757d]">
            <span>#車</span><span>#輸入車</span><span>#BMW</span>
          </div>
          <div className="mt-[30px] flex h-[41px] items-center justify-between">
            <span className="-mt-[4px] text-[17.07px] text-[#6c757d]">投稿日：<span className="tracking-[0.15px]">2025-07-01 15:01:13</span></span>
            <div className="flex gap-[11px] text-[18.67px] font-medium text-white">
              <button className="h-[41px] w-[60px] rounded-[4px] bg-[#007bff]">編集</button>
              <button className="h-[41px] w-[61px] rounded-[4px] bg-[#dc3545]">削除</button>
            </div>
          </div>
        </article>
        <label className="mt-[31px] block h-8" htmlFor="review">レビュー内容</label>
        <div className="relative mt-[11px] h-[114px]">
          <textarea id="review" className="block h-[114px] w-full resize-none rounded-[5px] border border-[#ced4da] bg-white" />
          <svg className="absolute bottom-[3px] right-[2px] size-[14px]" viewBox="0 0 14 14" stroke="#555" strokeWidth="1.500"><path d="M0 14L13 1M7 14L13 8" /></svg>
        </div>
        <div className="mt-[21px]">
          <Rating name="service" label="接客・対応の満足度" />
          <Rating name="price" label="料金の妥当性について" />
        </div>
      </main>
    </div>
  );
}
